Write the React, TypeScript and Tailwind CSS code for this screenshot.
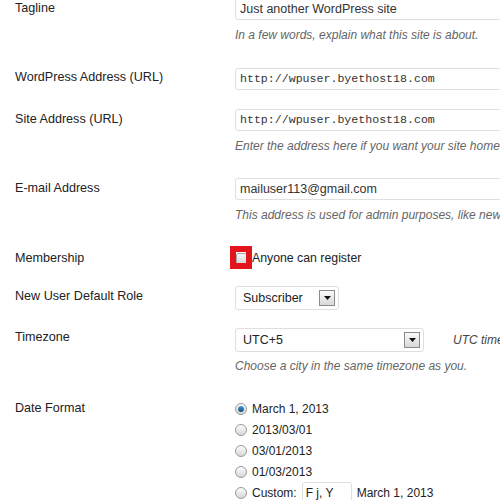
const sans = "font-['Liberation_Sans',Arial,sans-serif]";
const mono = "font-['Liberation_Mono','DejaVu_Sans_Mono',monospace]";

function Row({ label, labelPad, className, children }: { label: string; labelPad: string; className: string; children: React.ReactNode }) {
  return (
    <div className={`flex ${className}`}>
      <div className={`w-[235px] shrink-0 pl-[15px] text-[12.6px] leading-[15px] text-[#222] ${labelPad}`}>{label}</div>
      <div className="flex-1 min-w-0">{children}</div>
    </div>
  );
}

function TextInput({ value, isMono, className }: { value: string; isMono?: boolean; className: string }) {
  return (
    <div className={`flex h-[22px] items-center rounded-[3px] border border-[#dfdfdf] bg-white pl-[4px] text-[#333] whitespace-nowrap ${isMono ? `${mono} text-[11.6px]` : "text-[12.5px]"} ${className}`}>
      {value}
    </div>
  );
}

function Desc({ text, className }: { text: string; className: string }) {
  return <div className={`leading-[15px] italic text-[#666] whitespace-nowrap ${className}`}>{text}</div>;
}

function Select({ value, width }: { value: string; width: string }) {
  return (
    <div className={`flex h-[24px] items-center justify-between rounded-[3px] border border-[#dfdfdf] bg-white pl-[7px] pr-[3px] text-[12.5px] text-[#222] ${width}`}>
      <span>{value}</span>
      <span className="flex h-[16px] w-[16px] items-center justify-center border border-[#8a8a8a] bg-gradient-to-b from-[#fafafa] to-[#d8d8d8]">
        <svg width="7" height="4" viewBox="0 0 7 4"><path d="M0 0h7L3.5 4z" fill="#111" /></svg>
      </span>
    </div>
  );
}

function Radio({ checked }: { checked?: boolean }) {
  return (
    <span className="flex h-[12px] w-[12px] shrink-0 items-center justify-center rounded-full border border-[#9a9a9a] bg-gradient-to-b from-[#fdfdfd] to-[#d6d6d6]">
      {checked && <span className="h-[6px] w-[6px] rounded-full bg-gradient-to-b from-[#4a9fd6] to-[#0d4f7e]" />}
    </span>
  );
}

export default function App() {
  const dates = ["March 1, 2013", "2013/03/01", "03/01/2013", "01/03/2013"];
  return (
    <div className={`relative h-[500px] w-[500px] overflow-hidden bg-white text-[12px] ${sans}`}>
      <Row label="Tagline" labelPad="pt-[3px]" className="mt-[-2px]">
        <TextInput value="Just another WordPress site" className="w-[300px]" />
        <Desc text="In a few words, explain what this site is about." className="mt-[8px]" />
      </Row>
      <Row label="WordPress Address (URL)" labelPad="pt-[2px]" className="mt-[25px]">
        <TextInput value="http://wpuser.byethost18.com" isMono className="w-[300px]" />
      </Row>
      <Row label="Site Address (URL)" labelPad="pt-[3px]" className="mt-[19px]">
        <TextInput value="http://wpuser.byethost18.com" isMono className="w-[300px]" />
        <Desc text="Enter the address here if you want your site home page to be different" className="mt-[8px]" />
      </Row>
      <Row label="E-mail Address" labelPad="pt-[3px]" className="mt-[24px]">
        <TextInput value="mailuser113@gmail.com" className="w-[300px]" />
        <Desc text="This address is used for admin purposes, like new user notification." className="mt-[8px]" />
      </Row>
      <Row label="Membership" labelPad="" className="mt-[28px]">
        <div className="flex h-[15px] items-center text-[12.3px] text-[#222]">
          <span className="ml-px h-[12px] w-[12px] shrink-0 rounded-[2px] border border-[#a8a8a8] bg-gradient-to-b from-[#f4f4f4] to-[#d4d4d4]" />
          <span className="ml-[4px]">Anyone can register</span>
        </div>
      </Row>
      <Row label="New User Default Role" labelPad="pt-[3px]" className="mt-[20px]">
        <Select value="Subscriber" width="w-[104px]" />
      </Row>
      <Row label="Timezone" labelPad="pt-[2px]" className="mt-[18px]">
        <div className="flex items-center">
          <Select value="UTC+5" width="w-[189px] shrink-0" />
          <span className="ml-[29px] italic text-[#444] whitespace-nowrap">UTC time is 2013-03-01</span>
        </div>
        <Desc text="Choose a city in the same timezone as you." className="mt-[7px]" />
      </Row>
      <Row label="Date Format" labelPad="pt-[3px]" className="mt-[24px]">
        {dates.map((d, i) => (
          <div key={d} className="flex h-[21px] items-center text-[#222]">
            <Radio checked={i === 0} />
            <span className="ml-[5px]">{d}</span>
          </div>
        ))}
        <div className="flex h-[21px] items-center text-[#222]">
          <Radio />
          <span className="ml-[5px]">Custom:</span>
          <span className="ml-[5px] flex h-[22px] w-[50px] shrink-0 items-center rounded-[3px] border border-[#dfdfdf] pl-[3px]">F j, Y</span>
          <span className="ml-[5px] whitespace-nowrap">March 1, 2013</span>
        </div>
      </Row>
      <div className="absolute left-[230px] top-[246px] h-[23px] w-[22px] border-[6px] border-[#e3141c]" />
    </div>
  );
}
